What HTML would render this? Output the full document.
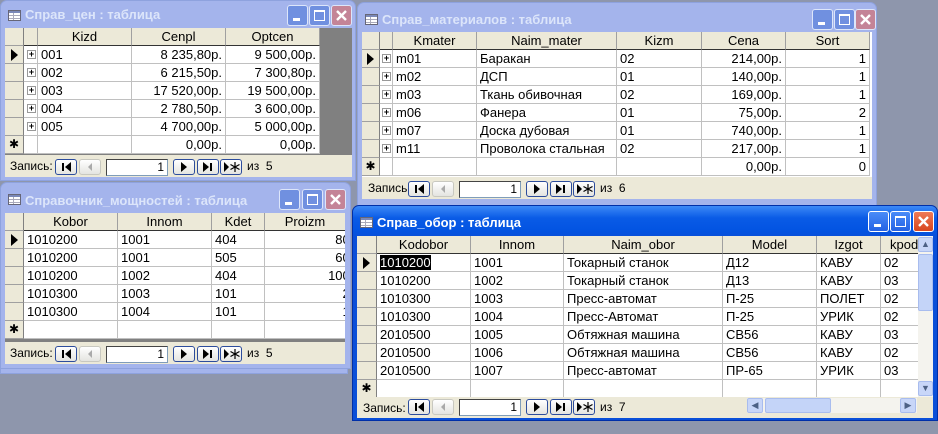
<!DOCTYPE html>
<html><head><meta charset="utf-8"><style>
*{margin:0;padding:0;box-sizing:border-box}
body{width:938px;height:434px;background:#8E96AC;position:relative;overflow:hidden;font-family:"Liberation Sans",sans-serif}
.win{position:absolute;border-radius:7px 7px 0 0}
.inact{background:#A4B4EC;border:1px solid #8EA2DE}
.act{background:#0A4FD8;border:1px solid #002FA8}
.tt{position:absolute;left:24px;font:bold 13px "Liberation Sans",sans-serif;white-space:nowrap}
.inact .tt{color:#DCE5FA}
.act .tt{color:#fff}
.ico{position:absolute;left:7px;width:13px;height:11px;border:1px solid #667;background:#fff;background-image:linear-gradient(#7A88B8 0 0),linear-gradient(#AAB 0 0),linear-gradient(#AAB 0 0),linear-gradient(#AAB 0 0);background-size:100% 2px,100% 1px,100% 1px,1px 100%;background-position:0 0,0 4px,0 7px,4px 0;background-repeat:no-repeat}
.tb{position:absolute;width:21px;height:21px;border:1px solid #fff;border-radius:3px}
.inact .tb{background:#7090E0;border-color:#DDE6FA}
.inact .tb.x{background:#C48497}
.act .tb{background:linear-gradient(#4A8CF8,#2462E4)}
.act .tb.x{background:linear-gradient(#EE7A58,#D8461E)}
.g{position:absolute;background:#808080;overflow:hidden}
.row{display:flex;height:18px}
.c{flex:none;height:18px;border-right:1px solid #C0C0C0;border-bottom:1px solid #C0C0C0;background:#fff;font-size:13px;line-height:17px;padding:0 3px;white-space:nowrap;overflow:hidden;color:#000}
.h{background:#ECE9D8;text-align:center;border-bottom:1px solid #333;border-right:1px solid #A0A0A0}
.s{background:#ECE9D8;border-right:1px solid #808080;border-bottom:1px solid #A0A0A0;padding:0;text-align:center;font-size:12px}
.r{text-align:right}
.e{padding:0;position:relative}
.e i{position:absolute;left:3px;top:4px;width:9px;height:9px;border:1px solid #999;font:bold 9px/7px "Liberation Sans";text-align:center;font-style:normal;background:#fff}
.tri{display:inline-block;width:0;height:0;border-left:7px solid #000;border-top:6px solid transparent;border-bottom:6px solid transparent;margin-top:3px}
.nav{position:absolute;background:#ECE9D8;height:22px;font-size:12px}
.nav .lb{position:absolute;top:4px}
.nb{position:absolute;top:4px;width:22px;height:16px;border:1px solid #2C4C9C;border-radius:3px;background:linear-gradient(#fff,#E4E4E0)}
.nb.d{border-color:#C8C8C0}
.inp{position:absolute;top:4px;width:62px;height:17px;background:#fff;border:1px solid #7F9DB9;border-top-color:#444;border-left-color:#444;text-align:right;padding-right:3px;font-size:12px;line-height:15px}
.of{position:absolute;top:4px}
</style></head><body>

<div class="win inact" style="left:0;top:0;width:356px;height:181px">
 <div class="ico" style="top:9px"></div>
 <div class="tt" style="top:6px">Справ_цен : таблица</div>
 <div class="tb" style="left:286px;top:4px"><svg width="19" height="19"><rect x="5" y="12" width="7" height="3" fill="#fff"/></svg></div>
 <div class="tb" style="left:308px;top:4px"><svg width="19" height="19"><rect x="4.5" y="4.5" width="10" height="10" fill="none" stroke="#fff" stroke-width="1"/><rect x="4" y="4" width="11" height="2" fill="#fff"/></svg></div>
 <div class="tb x" style="left:330px;top:4px"><svg width="19" height="19"><path d="M5 5L14 14M14 5L5 14" stroke="#fff" stroke-width="2.4"/></svg></div>
</div>
<div class="g" style="left:5px;top:28px;width:347px;height:127px">
 <div class="row"><div class="c s" style="width:19px"></div><div class="c h" style="width:14px"></div><div class="c h" style="width:94px">Kizd</div><div class="c h" style="width:94px">Cenpl</div><div class="c h" style="width:94px">Optcen</div></div>
 <div class="row"><div class="c s" style="width:19px"><span class="tri"></span></div><div class="c e" style="width:14px"><i>+</i></div><div class="c" style="width:94px">001</div><div class="c r" style="width:94px">8 235,80р.</div><div class="c r" style="width:94px">9 500,00р.</div></div>
 <div class="row"><div class="c s" style="width:19px"></div><div class="c e" style="width:14px"><i>+</i></div><div class="c" style="width:94px">002</div><div class="c r" style="width:94px">6 215,50р.</div><div class="c r" style="width:94px">7 300,80р.</div></div>
 <div class="row"><div class="c s" style="width:19px"></div><div class="c e" style="width:14px"><i>+</i></div><div class="c" style="width:94px">003</div><div class="c r" style="width:94px">17 520,00р.</div><div class="c r" style="width:94px">19 500,00р.</div></div>
 <div class="row"><div class="c s" style="width:19px"></div><div class="c e" style="width:14px"><i>+</i></div><div class="c" style="width:94px">004</div><div class="c r" style="width:94px">2 780,50р.</div><div class="c r" style="width:94px">3 600,00р.</div></div>
 <div class="row"><div class="c s" style="width:19px"></div><div class="c e" style="width:14px"><i>+</i></div><div class="c" style="width:94px">005</div><div class="c r" style="width:94px">4 700,00р.</div><div class="c r" style="width:94px">5 000,00р.</div></div>
 <div class="row"><div class="c s" style="width:19px">✱</div><div class="c" style="width:14px"></div><div class="c" style="width:94px"></div><div class="c r" style="width:94px">0,00р.</div><div class="c r" style="width:94px">0,00р.</div></div>
</div>
<div class="nav" style="left:5px;top:155px;width:347px">
 <span class="lb" style="left:5px">Запись:</span>
 <div class="nb" style="left:50px"><svg width="20" height="14"><rect x="6" y="3" width="2" height="8"/><path d="M15 2L9 7L15 12Z"/></svg></div>
 <div class="nb d" style="left:74px"><svg width="20" height="14"><path d="M12 3L8 7L12 11Z" fill="#AAA"/></svg></div>
 <div class="inp" style="left:101px">1</div>
 <div class="nb" style="left:168px"><svg width="20" height="14"><path d="M7 2L13 7L7 12Z"/></svg></div>
 <div class="nb" style="left:192px"><svg width="20" height="14"><path d="M5 2L11 7L5 12Z"/><rect x="12" y="3" width="2" height="8"/></svg></div>
 <div class="nb" style="left:215px"><svg width="20" height="14"><path d="M3 2L8 7L3 12Z"/><path d="M14 2V12M9.5 4.5L18.5 9.5M9.5 9.5L18.5 4.5" stroke="#000" stroke-width="1.2"/></svg></div>
 <span class="of" style="left:242px">из&nbsp; 5</span>
</div>

<div class="win inact" style="left:357px;top:2px;width:520px;height:204px">
 <div class="ico" style="top:11px"></div>
 <div class="tt" style="top:9px">Справ_материалов : таблица</div>
 <div class="tb" style="left:454px;top:6px"><svg width="19" height="19"><rect x="5" y="12" width="7" height="3" fill="#fff"/></svg></div>
 <div class="tb" style="left:476px;top:6px"><svg width="19" height="19"><rect x="4.5" y="4.5" width="10" height="10" fill="none" stroke="#fff"/><rect x="4" y="4" width="11" height="2" fill="#fff"/></svg></div>
 <div class="tb x" style="left:497px;top:6px"><svg width="19" height="19"><path d="M5 5L14 14M14 5L5 14" stroke="#fff" stroke-width="2.4"/></svg></div>
</div>
<div class="g" style="left:362px;top:32px;width:510px;height:145px;background:#fff">
 <div class="row"><div class="c s" style="width:18px"></div><div class="c h" style="width:13px"></div><div class="c h" style="width:84px">Kmater</div><div class="c h" style="width:140px">Naim_mater</div><div class="c h" style="width:85px">Kizm</div><div class="c h" style="width:84px">Cena</div><div class="c h" style="width:84px">Sort</div></div>
 <div class="row"><div class="c s" style="width:18px"><span class="tri"></span></div><div class="c e" style="width:13px"><i style="left:2px">+</i></div><div class="c" style="width:84px">m01</div><div class="c" style="width:140px">Баракан</div><div class="c" style="width:85px">02</div><div class="c r" style="width:84px">214,00р.</div><div class="c r" style="width:84px">1</div></div>
 <div class="row"><div class="c s" style="width:18px"></div><div class="c e" style="width:13px"><i style="left:2px">+</i></div><div class="c" style="width:84px">m02</div><div class="c" style="width:140px">ДСП</div><div class="c" style="width:85px">01</div><div class="c r" style="width:84px">140,00р.</div><div class="c r" style="width:84px">1</div></div>
 <div class="row"><div class="c s" style="width:18px"></div><div class="c e" style="width:13px"><i style="left:2px">+</i></div><div class="c" style="width:84px">m03</div><div class="c" style="width:140px">Ткань обивочная</div><div class="c" style="width:85px">02</div><div class="c r" style="width:84px">169,00р.</div><div class="c r" style="width:84px">1</div></div>
 <div class="row"><div class="c s" style="width:18px"></div><div class="c e" style="width:13px"><i style="left:2px">+</i></div><div class="c" style="width:84px">m06</div><div class="c" style="width:140px">Фанера</div><div class="c" style="width:85px">01</div><div class="c r" style="width:84px">75,00р.</div><div class="c r" style="width:84px">2</div></div>
 <div class="row"><div class="c s" style="width:18px"></div><div class="c e" style="width:13px"><i style="left:2px">+</i></div><div class="c" style="width:84px">m07</div><div class="c" style="width:140px">Доска дубовая</div><div class="c" style="width:85px">01</div><div class="c r" style="width:84px">740,00р.</div><div class="c r" style="width:84px">1</div></div>
 <div class="row"><div class="c s" style="width:18px"></div><div class="c e" style="width:13px"><i style="left:2px">+</i></div><div class="c" style="width:84px">m11</div><div class="c" style="width:140px">Проволока стальная</div><div class="c" style="width:85px">02</div><div class="c r" style="width:84px">217,00р.</div><div class="c r" style="width:84px">1</div></div>
 <div class="row"><div class="c s" style="width:18px">✱</div><div class="c" style="width:13px"></div><div class="c" style="width:84px"></div><div class="c" style="width:140px"></div><div class="c" style="width:85px"></div><div class="c r" style="width:84px">0,00р.</div><div class="c r" style="width:84px">0</div></div>
</div>
<div class="nav" style="left:362px;top:177px;width:510px">
 <span class="lb" style="left:6px">Запись:</span>
 <div class="nb" style="left:46px"><svg width="20" height="14"><rect x="6" y="3" width="2" height="8"/><path d="M15 2L9 7L15 12Z"/></svg></div>
 <div class="nb d" style="left:70px"><svg width="20" height="14"><path d="M12 3L8 7L12 11Z" fill="#AAA"/></svg></div>
 <div class="inp" style="left:97px">1</div>
 <div class="nb" style="left:164px"><svg width="20" height="14"><path d="M7 2L13 7L7 12Z"/></svg></div>
 <div class="nb" style="left:188px"><svg width="20" height="14"><path d="M5 2L11 7L5 12Z"/><rect x="12" y="3" width="2" height="8"/></svg></div>
 <div class="nb" style="left:211px"><svg width="20" height="14"><path d="M3 2L8 7L3 12Z"/><path d="M14 2V12M9.5 4.5L18.5 9.5M9.5 9.5L18.5 4.5" stroke="#000" stroke-width="1.2"/></svg></div>
 <span class="of" style="left:238px">из&nbsp; 6</span>
</div>

<div style="position:absolute;left:0;top:366px;width:348px;height:8px;background:#A4B4EC;border:1px solid #8EA2DE"></div>
<div class="win inact" style="left:0;top:182px;width:351px;height:187px">
 <div class="ico" style="top:11px"></div>
 <div class="tt" style="top:10px">Справочник_мощностей : таблица</div>
 <div class="tb" style="left:278px;top:6px"><svg width="19" height="19"><rect x="5" y="12" width="7" height="3" fill="#fff"/></svg></div>
 <div class="tb" style="left:301px;top:6px"><svg width="19" height="19"><rect x="4.5" y="4.5" width="10" height="10" fill="none" stroke="#fff"/><rect x="4" y="4" width="11" height="2" fill="#fff"/></svg></div>
 <div class="tb x" style="left:324px;top:6px"><svg width="19" height="19"><path d="M5 5L14 14M14 5L5 14" stroke="#fff" stroke-width="2.4"/></svg></div>
</div>
<div class="g" style="left:5px;top:213px;width:340px;height:129px">
 <div class="row"><div class="c s" style="width:19px"></div><div class="c h" style="width:94px">Kobor</div><div class="c h" style="width:94px">Innom</div><div class="c h" style="width:53px">Kdet</div><div class="c h" style="width:96px;padding-right:18px">Proizm</div></div>
 <div class="row"><div class="c s" style="width:19px"><span class="tri"></span></div><div class="c" style="width:94px">1010200</div><div class="c" style="width:94px">1001</div><div class="c" style="width:53px">404</div><div class="c r" style="width:96px">800</div></div>
 <div class="row"><div class="c s" style="width:19px"></div><div class="c" style="width:94px">1010200</div><div class="c" style="width:94px">1001</div><div class="c" style="width:53px">505</div><div class="c r" style="width:96px">600</div></div>
 <div class="row"><div class="c s" style="width:19px"></div><div class="c" style="width:94px">1010200</div><div class="c" style="width:94px">1002</div><div class="c" style="width:53px">404</div><div class="c r" style="width:96px">1000</div></div>
 <div class="row"><div class="c s" style="width:19px"></div><div class="c" style="width:94px">1010300</div><div class="c" style="width:94px">1003</div><div class="c" style="width:53px">101</div><div class="c r" style="width:96px">20</div></div>
 <div class="row"><div class="c s" style="width:19px"></div><div class="c" style="width:94px">1010300</div><div class="c" style="width:94px">1004</div><div class="c" style="width:53px">101</div><div class="c r" style="width:96px">10</div></div>
 <div class="row"><div class="c s" style="width:19px">✱</div><div class="c" style="width:94px"></div><div class="c" style="width:94px"></div><div class="c" style="width:53px"></div><div class="c" style="width:96px"></div></div>
</div>
<div class="nav" style="left:5px;top:342px;width:340px">
 <span class="lb" style="left:5px">Запись:</span>
 <div class="nb" style="left:50px"><svg width="20" height="14"><rect x="6" y="3" width="2" height="8"/><path d="M15 2L9 7L15 12Z"/></svg></div>
 <div class="nb d" style="left:74px"><svg width="20" height="14"><path d="M12 3L8 7L12 11Z" fill="#AAA"/></svg></div>
 <div class="inp" style="left:101px">1</div>
 <div class="nb" style="left:168px"><svg width="20" height="14"><path d="M7 2L13 7L7 12Z"/></svg></div>
 <div class="nb" style="left:192px"><svg width="20" height="14"><path d="M5 2L11 7L5 12Z"/><rect x="12" y="3" width="2" height="8"/></svg></div>
 <div class="nb" style="left:215px"><svg width="20" height="14"><path d="M3 2L8 7L3 12Z"/><path d="M14 2V12M9.5 4.5L18.5 9.5M9.5 9.5L18.5 4.5" stroke="#000" stroke-width="1.2"/></svg></div>
 <span class="of" style="left:242px">из&nbsp; 5</span>
</div>

<div class="win act" style="left:352px;top:205px;width:586px;height:216px;background:linear-gradient(#3D8AF7,#0A5BE6 12px,#0354E2 24px,#0A4FD8 32px)">
 <div class="ico" style="top:11px"></div>
 <div class="tt" style="top:9px">Справ_обор : таблица</div>
 <div class="tb" style="left:515px;top:5px"><svg width="19" height="19"><rect x="5" y="12" width="7" height="3" fill="#fff"/></svg></div>
 <div class="tb" style="left:537px;top:5px"><svg width="19" height="19"><rect x="4.5" y="4.5" width="10" height="10" fill="none" stroke="#fff"/><rect x="4" y="4" width="11" height="2" fill="#fff"/></svg></div>
 <div class="tb x" style="left:560px;top:5px"><svg width="19" height="19"><path d="M5 5L14 14M14 5L5 14" stroke="#fff" stroke-width="2.4"/></svg></div>
</div>
<div class="g" style="left:357px;top:236px;width:561px;height:161px;background:#fff">
 <div class="row"><div class="c s" style="width:20px"></div><div class="c h" style="width:94px">Kodobor</div><div class="c h" style="width:93px">Innom</div><div class="c h" style="width:159px">Naim_obor</div><div class="c h" style="width:94px">Model</div><div class="c h" style="width:64px">Izgot</div><div class="c h" style="width:60px;text-align:left;padding-left:9px">kpod</div></div>
 <div class="row"><div class="c s" style="width:20px"><span class="tri"></span></div><div class="c" style="width:94px"><span style="background:#000;color:#fff">1010200</span></div><div class="c" style="width:93px">1001</div><div class="c" style="width:159px">Токарный станок</div><div class="c" style="width:94px">Д12</div><div class="c" style="width:64px">КАВУ</div><div class="c" style="width:60px">02</div></div>
 <div class="row"><div class="c s" style="width:20px"></div><div class="c" style="width:94px">1010200</div><div class="c" style="width:93px">1002</div><div class="c" style="width:159px">Токарный станок</div><div class="c" style="width:94px">Д13</div><div class="c" style="width:64px">КАВУ</div><div class="c" style="width:60px">03</div></div>
 <div class="row"><div class="c s" style="width:20px"></div><div class="c" style="width:94px">1010300</div><div class="c" style="width:93px">1003</div><div class="c" style="width:159px">Пресс-автомат</div><div class="c" style="width:94px">П-25</div><div class="c" style="width:64px">ПОЛЕТ</div><div class="c" style="width:60px">02</div></div>
 <div class="row"><div class="c s" style="width:20px"></div><div class="c" style="width:94px">1010300</div><div class="c" style="width:93px">1004</div><div class="c" style="width:159px">Пресс-Автомат</div><div class="c" style="width:94px">П-25</div><div class="c" style="width:64px">УРИК</div><div class="c" style="width:60px">02</div></div>
 <div class="row"><div class="c s" style="width:20px"></div><div class="c" style="width:94px">2010500</div><div class="c" style="width:93px">1005</div><div class="c" style="width:159px">Обтяжная машина</div><div class="c" style="width:94px">СВ56</div><div class="c" style="width:64px">КАВУ</div><div class="c" style="width:60px">03</div></div>
 <div class="row"><div class="c s" style="width:20px"></div><div class="c" style="width:94px">2010500</div><div class="c" style="width:93px">1006</div><div class="c" style="width:159px">Обтяжная машина</div><div class="c" style="width:94px">СВ56</div><div class="c" style="width:64px">КАВУ</div><div class="c" style="width:60px">02</div></div>
 <div class="row"><div class="c s" style="width:20px"></div><div class="c" style="width:94px">2010500</div><div class="c" style="width:93px">1007</div><div class="c" style="width:159px">Пресс-автомат</div><div class="c" style="width:94px">ПР-65</div><div class="c" style="width:64px">УРИК</div><div class="c" style="width:60px">03</div></div>
 <div class="row"><div class="c s" style="width:20px">✱</div><div class="c" style="width:94px"></div><div class="c" style="width:93px"></div><div class="c" style="width:159px"></div><div class="c" style="width:94px"></div><div class="c" style="width:64px"></div><div class="c" style="width:60px"></div></div>
</div>
<div style="position:absolute;left:918px;top:236px;width:15px;height:161px;background:#F4F3EE">
 <div style="position:absolute;left:0;top:1px;width:15px;height:15px;background:#C8D6F8;border:1px solid #A8BCEE;border-radius:2px;font-size:9px;text-align:center;line-height:13px;color:#4D6185">▲</div>
 <div style="position:absolute;left:0;top:18px;width:15px;height:57px;background:#C4D4F8;border:1px solid #A8BCEE;border-radius:2px"></div>
 <div style="position:absolute;left:0;top:145px;width:15px;height:15px;background:#C8D6F8;border:1px solid #A8BCEE;border-radius:2px;font-size:9px;text-align:center;line-height:13px;color:#4D6185">▼</div>
</div>
<div class="nav" style="left:357px;top:397px;width:576px;height:21px">
 <span class="lb" style="left:6px">Запись:</span>
 <div class="nb" style="left:51px;top:2px"><svg width="20" height="14"><rect x="6" y="3" width="2" height="8"/><path d="M15 2L9 7L15 12Z"/></svg></div>
 <div class="nb d" style="left:75px;top:2px"><svg width="20" height="14"><path d="M12 3L8 7L12 11Z" fill="#AAA"/></svg></div>
 <div class="inp" style="left:102px;top:2px">1</div>
 <div class="nb" style="left:169px;top:2px"><svg width="20" height="14"><path d="M7 2L13 7L7 12Z"/></svg></div>
 <div class="nb" style="left:193px;top:2px"><svg width="20" height="14"><path d="M5 2L11 7L5 12Z"/><rect x="12" y="3" width="2" height="8"/></svg></div>
 <div class="nb" style="left:216px;top:2px"><svg width="20" height="14"><path d="M3 2L8 7L3 12Z"/><path d="M14 2V12M9.5 4.5L18.5 9.5M9.5 9.5L18.5 4.5" stroke="#000" stroke-width="1.2"/></svg></div>
 <span class="of" style="left:243px;top:3px">из&nbsp; 7</span>
 <div style="position:absolute;left:390px;top:1px;width:170px;height:15px;background:#F4F3EE">
  <div style="position:absolute;left:0;top:0;width:16px;height:15px;background:#C8D6F8;border:1px solid #A8BCEE;border-radius:2px;font-size:9px;text-align:center;line-height:13px;color:#4D6185">◀</div>
  <div style="position:absolute;left:18px;top:0;width:66px;height:15px;background:#C4D4F8;border:1px solid #A8BCEE;border-radius:2px"></div>
  <div style="position:absolute;left:153px;top:0;width:16px;height:15px;background:#C8D6F8;border:1px solid #A8BCEE;border-radius:2px;font-size:9px;text-align:center;line-height:13px;color:#4D6185">▶</div>
 </div>
</div>
</body></html>
